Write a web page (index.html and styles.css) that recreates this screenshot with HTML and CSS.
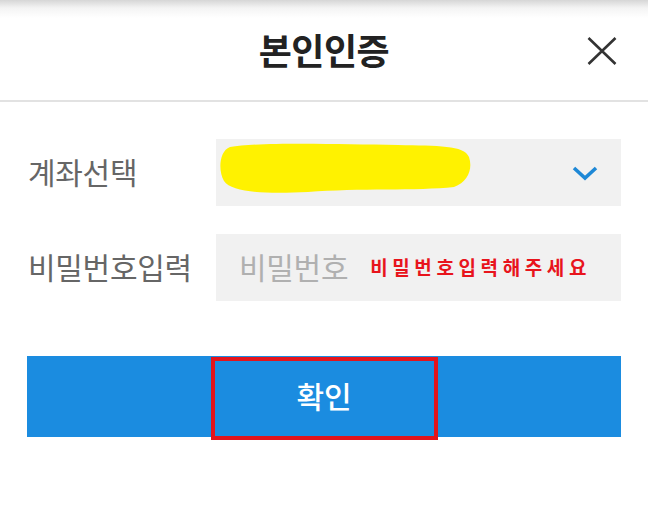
FILE: index.html
```html
<!DOCTYPE html>
<html>
<head>
<title>본인인증</title>
<meta name="viewport" content="width=device-width, initial-scale=1">
<link rel="stylesheet" href="styles.css">
</head>
<body>
  <div class="dialog">
    <div class="header">
      <span></span>
      <h1 class="title">본인인증</h1>
      <button class="close" aria-label="닫기">
        <svg width="30" height="28" viewBox="0 0 30 28">
          <path d="M1.5 1 L28.5 27 M28.5 1 L1.5 27" stroke="#333" stroke-width="2.6" fill="none"/>
        </svg>
      </button>
    </div>

    <div class="form">
      <div class="row">
        <label class="label">계좌선택</label>
        <div class="field field-select">
          <svg class="blob" width="256" height="54" viewBox="0 0 256 54">
            <path d="M12 6 C40 1 120 3 180 4 C220 5 246 4 251 16 C255 28 250 41 236 46 C200 50 140 47 90 51 C50 53 14 52 6 40 C0 30 1 10 12 6 Z" fill="#fff200"/>
          </svg>
          <svg class="chevron" width="26" height="15" viewBox="0 0 26 15">
            <path d="M2 2 L13 12 L24 2" stroke="#1e88d6" stroke-width="3.6" fill="none"/>
          </svg>
        </div>
      </div>

      <div class="row">
        <label class="label">비밀번호입력</label>
        <div class="field">
          <span class="placeholder">비밀번호</span>
          <span class="note">비밀번호입력해주세요</span>
        </div>
      </div>

      <div class="submit-wrap">
        <button class="btn-submit">확인</button>
        <div class="highlight"></div>
      </div>
    </div>
  </div>
</body>
</html>
```

FILE: styles.css
```css
body {
  margin: 0;
  background-color: white;
  font-family: "Noto Sans CJK KR", "Noto Sans", sans-serif;
}

.dialog {
  width: 648px;
  height: 510px;
  overflow: hidden;
}

.header {
  height: 100px;
  display: grid;
  grid-template-columns: 1fr auto 1fr;
  align-items: center;
  background: linear-gradient(to bottom, #d6d6d6 0, #f4f4f4 8px, #ffffff 18px);
  border-bottom: 2px solid #e2e2e2;
}

.title {
  margin: 0;
  font-size: 36px;
  font-weight: 700;
  color: #222;
  letter-spacing: -0.5px;
  padding-bottom: 2px;
}

.close {
  justify-self: end;
  margin-right: 31px;
  padding: 0;
  border: none;
  background: none;
  display: flex;
  margin-top: 2px;
}

.form {
  padding: 37px 27px 0 28px;
}

.row {
  display: flex;
  align-items: center;
  margin-bottom: 28px;
}

.label {
  width: 188px;
  font-size: 30px;
  color: #666;
  letter-spacing: -0.3px;
  padding-bottom: 4px;
}

.field {
  flex: 1;
  height: 67px;
  background-color: #f1f1f1;
  display: flex;
  align-items: center;
  padding: 0 23px;
  position: relative;
}

.field-select {
  justify-content: flex-end;
}

.blob {
  position: absolute;
  left: 2px;
  top: 2px;
}

.chevron {
  margin-top: 1px;
}

.placeholder {
  font-size: 30px;
  color: #b0b0b0;
  letter-spacing: -0.3px;
  padding-bottom: 3px;
}

.note {
  margin-left: 22px;
  font-size: 19px;
  font-weight: 700;
  color: #e8141c;
  letter-spacing: 4.6px;
  padding-bottom: 3px;
}

.submit-wrap {
  position: relative;
  margin-top: 55px;
  margin-left: -1px;
}

.btn-submit {
  width: 100%;
  height: 81px;
  border: none;
  background-color: #1b8ce0;
  color: white;
  font-family: inherit;
  font-size: 30px;
  font-weight: 500;
  padding-bottom: 4px;
  display: block;
}

.highlight {
  position: absolute;
  left: 184px;
  top: 1px;
  width: 219px;
  height: 75px;
  border: 4px solid #e3141c;
}
```
